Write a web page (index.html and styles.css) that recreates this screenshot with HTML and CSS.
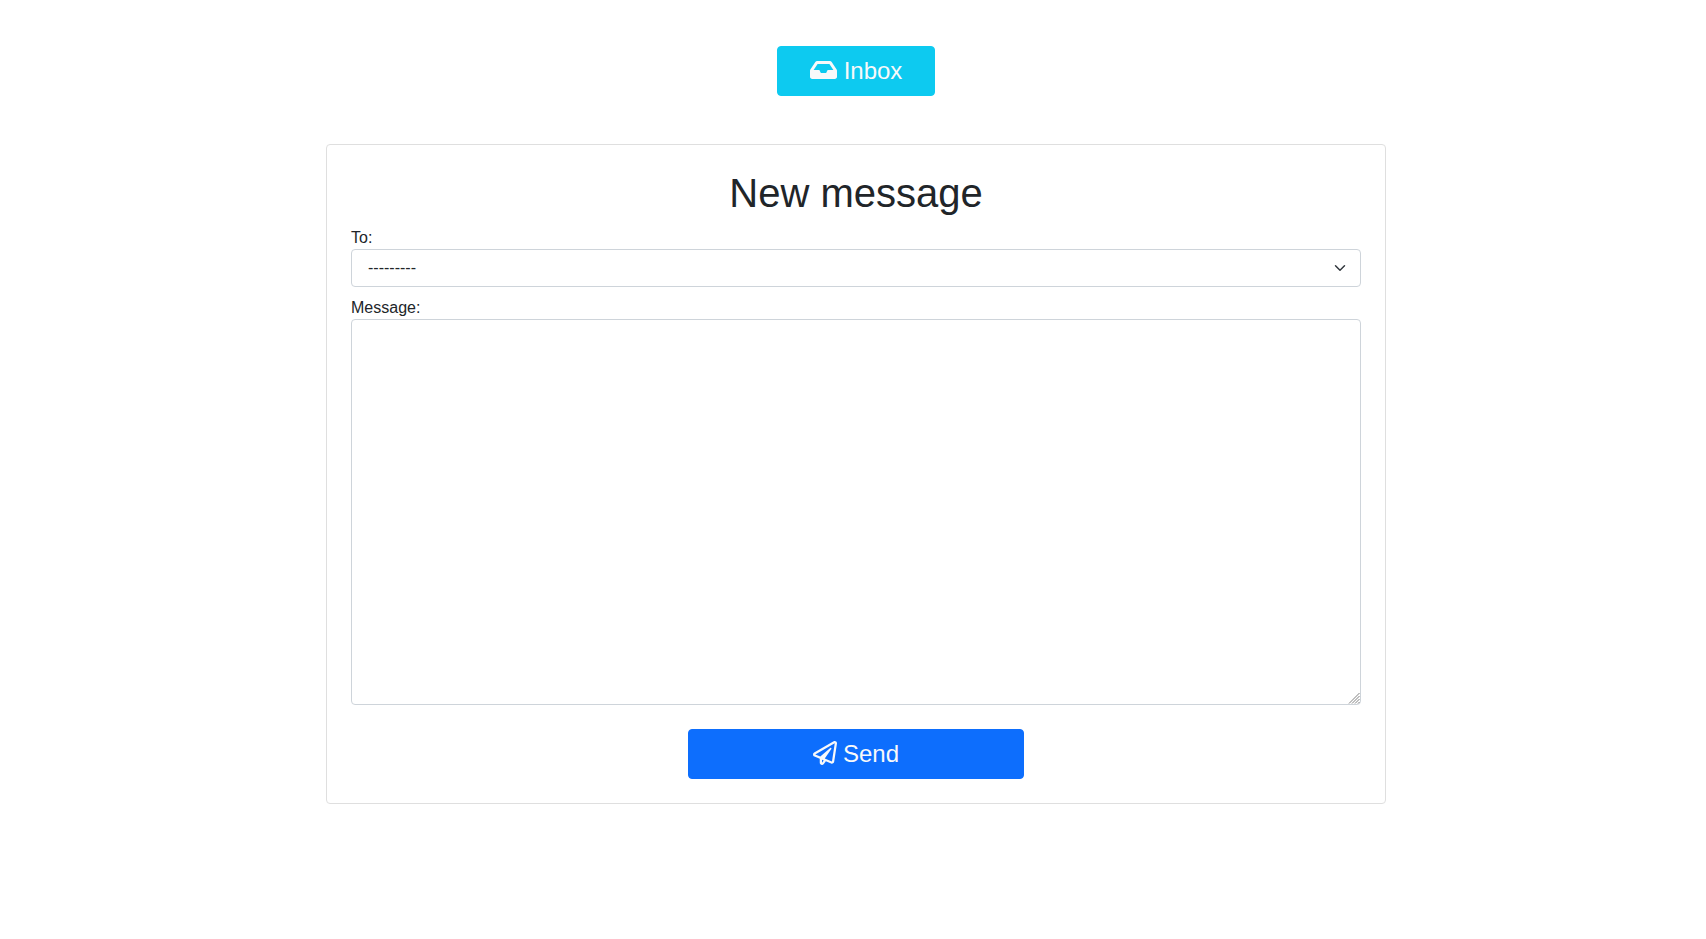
FILE: index.html
```
<!DOCTYPE html>
<html lang="en">
<head>
  <meta charset="utf-8">
  <meta name="viewport" content="width=device-width, initial-scale=1">
  <title>New message</title>
  <link rel="stylesheet" href="styles.css">
</head>
<body>
  <main class="page">
    <a class="btn btn-info" href="#inbox">
      <svg class="icon icon-wide" viewBox="0 0 576 512" aria-hidden="true"><path fill="currentColor" d="M567.938 243.908L462.25 85.374A48.003 48.003 0 0 0 422.311 64H153.689a48 48 0 0 0-39.938 21.374L8.062 243.908A47.994 47.994 0 0 0 0 270.533V400c0 26.51 21.49 48 48 48h480c26.51 0 48-21.49 48-48V270.533a47.994 47.994 0 0 0-8.062-26.625zM162.252 128h251.497l85.333 128H376l-32 64H232l-32-64H76.918l85.334-128z"/></svg>
      Inbox
    </a>
    <form class="card">
      <h1 class="title">New message</h1>
      <div class="field">
        <label class="label" for="recipient">To:</label>
        <select class="control select" id="recipient" name="recipient">
          <option value="">---------</option>
        </select>
      </div>
      <div class="field">
        <label class="label" for="message">Message:</label>
        <textarea class="control message" id="message" name="message"></textarea>
      </div>
      <button class="btn btn-primary" type="submit">
        <svg class="icon" viewBox="0 0 512 512" aria-hidden="true"><path fill="currentColor" d="M440 6.5L24 246.4c-34.4 19.9-31.1 70.8 5.7 85.9L144 379.6V464c0 46.4 59.2 65.5 86.6 28.6l43.8-59.1 111.9 46.2c5.9 2.4 12.1 3.6 18.3 3.6 8.2 0 16.3-2.1 23.6-6.2 12.8-7.2 21.6-20 23.9-34.5l59.4-387.2c6.1-40.1-36.9-68.8-71.5-48.9zM192 464v-64.6l36.6 15.1L192 464zm212.6-28.7l-153.8-63.5L391 169.5c10.7-15.5-9.5-33.5-23.7-21.2L155.8 332.6 48 288 464 48l-59.4 387.3z"/></svg>
        Send
      </button>
    </form>
  </main>
</body>
</html>
```
FILE: styles.css
```
*,
*::before,
*::after {
  box-sizing: border-box;
}

body {
  margin: 0;
  background: #fff;
  color: #212529;
  font-family: "Liberation Sans", Arial, sans-serif;
  font-size: 16px;
  line-height: 24px;
}

.page {
  display: flex;
  flex-direction: column;
  align-items: center;
  gap: 48px;
  padding: 46px 0 48px 6px;
}

.card {
  display: flex;
  flex-direction: column;
  width: 100%;
  max-width: 1060px;
  padding: 24px;
  border: 1px solid #dfdfdf;
  border-radius: 4px;
}

.title {
  margin: 0 0 8px;
  font-size: 40px;
  font-weight: 500;
  line-height: 48px;
  text-align: center;
}

.field {
  display: flex;
  flex-direction: column;
  margin-bottom: 8px;
}

.label {
  padding-top: 2px;
  line-height: 22px;
}

.control {
  width: 100%;
  margin: 0;
  padding: 6px 12px;
  border: 1px solid #ced4da;
  border-radius: 4px;
  background-color: #fff;
  color: #212529;
  font: inherit;
}

.select {
  padding: 6px 36px 6px 16px;
  appearance: none;
  background-image: url("data:image/svg+xml,%3Csvg xmlns='http://www.w3.org/2000/svg' viewBox='0 0 16 16'%3E%3Cpath fill='none' stroke='%23343a40' stroke-linecap='round' stroke-linejoin='round' stroke-width='2' d='M2 5l6 6 6-6'/%3E%3C/svg%3E");
  background-repeat: no-repeat;
  background-position: right 14px center;
  background-size: 12px 12px;
}

.message {
  height: 386px;
  resize: vertical;
}

.message::-webkit-resizer {
  background-image: url("data:image/svg+xml,%3Csvg xmlns='http://www.w3.org/2000/svg' width='15' height='15' viewBox='0 0 15 15'%3E%3Cpath fill='none' stroke='%23808080' d='M4 14.500L14.500 4M7 14.500L14.500 7M10 14.500L14.500 10M13 14.500L14.500 13'/%3E%3C/svg%3E");
  background-repeat: no-repeat;
  background-position: right bottom;
}

.btn {
  display: inline-flex;
  align-items: center;
  justify-content: center;
  gap: 6px;
  padding: 6px 32px;
  border: 1px solid transparent;
  border-radius: 4px;
  color: #f8f9fa;
  font-family: inherit;
  font-size: 24px;
  line-height: 36px;
  text-decoration: none;
  cursor: pointer;
}

.btn-info {
  gap: 7px;
  border-color: #0dcaf0;
  background: #0dcaf0;
}

.btn-primary {
  align-self: center;
  width: 100%;
  max-width: 336px;
  margin-top: 16px;
  border-color: #0d6efd;
  background: #0d6efd;
}

.icon {
  width: 24px;
  height: 24px;
  margin-bottom: 2px;
}

.icon-wide {
  width: 27px;
}
```
